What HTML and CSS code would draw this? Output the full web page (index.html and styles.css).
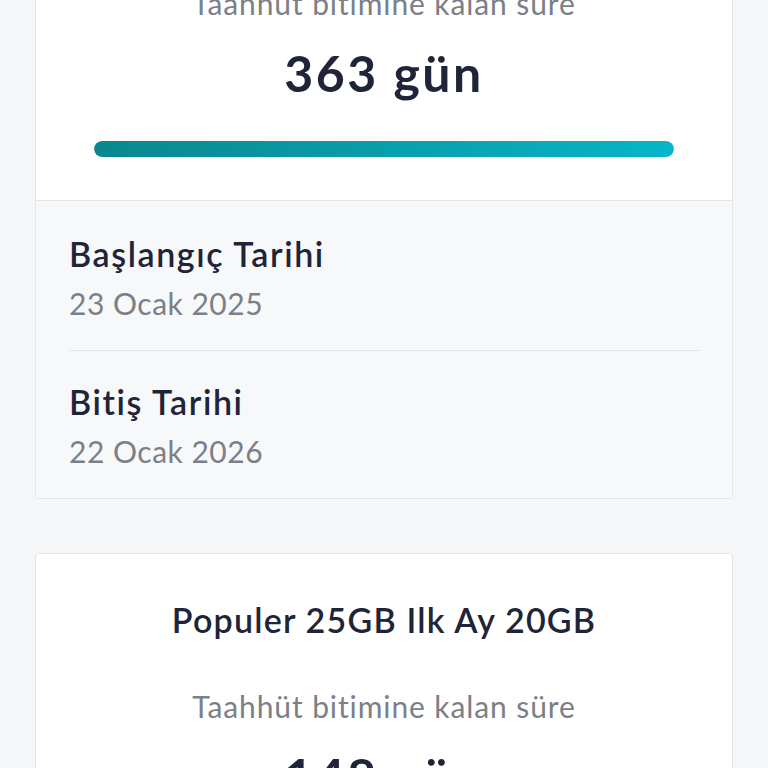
FILE: index.html
```html
<!DOCTYPE html>
<html lang="tr">
<head>
<meta charset="UTF-8"/>
<meta name="viewport" content="width=device-width, initial-scale=1.0"/>
<title>Taahhütlerim</title>
<link rel="stylesheet" href="styles.css">
</head>
<body>

<div class="commitment-list">

  <!-- Commitment card (scrolled, title above viewport) -->
  <div class="commitment-card">
    <div class="commitment-summary">
      <div class="commitment-label">Taahhüt bitimine kalan süre</div>
      <div class="commitment-days">363 gün</div>
      <div class="commitment-bar"><div class="commitment-bar-fill" style="width:100%"></div></div>
    </div>
    <div class="commitment-dates">
      <div class="date-row">
        <div class="date-title">Başlangıç Tarihi</div>
        <div class="date-value">23 Ocak 2025</div>
      </div>
      <div class="date-row">
        <div class="date-title">Bitiş Tarihi</div>
        <div class="date-value">22 Ocak 2026</div>
      </div>
    </div>
  </div>

  <div class="commitment-card">
    <div class="commitment-summary">
      <div class="commitment-name">Populer 25GB Ilk Ay 20GB</div>
      <div class="commitment-label">Taahhüt bitimine kalan süre</div>
      <div class="commitment-days">148 gün</div>
      <div class="commitment-bar"><div class="commitment-bar-fill" style="width:40%"></div></div>
    </div>
  </div>

</div>

</body>
</html>
```

FILE: styles.css
```css
/* GLOBAL */
html,body {
  margin:0; padding:0; background:#f5f6f8; overflow:hidden;
  font-family:"Lato","Noto Sans",sans-serif;
}
:root {
  --text-dark:#1f2438;
  --text-muted:#7b8088;
  --border:#e3e5e9;
  --soft-bg:#f7f8fa;
}

/* LIST (page is scrolled down a bit) */
.commitment-list {
  display:flex; flex-direction:column; gap:54px;
  padding:0 35px; margin-top:-16px;
}

/* CARD */
.commitment-card {
  background:#fff; border:1px solid var(--border); border-radius:4px; overflow:hidden;
}
.commitment-summary {
  display:flex; flex-direction:column; align-items:center; text-align:center;
  padding:46px 0 43px;
}
.commitment-card:first-child .commitment-summary {padding-top:0;}
.commitment-name {
  font-size:34px; line-height:40px; font-weight:600; color:var(--text-dark);
  letter-spacing:1.2px; margin-bottom:48px;
}
.commitment-label {
  font-size:30px; line-height:36px; color:var(--text-muted); letter-spacing:0.9px;
}
.commitment-days {
  font-size:50px; line-height:60px; font-weight:700; color:var(--text-dark);
  letter-spacing:2.5px; margin-top:22px;
}
.commitment-bar {
  align-self:stretch; margin:38px 58px 0; height:16px; border-radius:8px; background:#e8ebee; overflow:hidden;
}
.commitment-bar-fill {
  height:100%; border-radius:8px; background:linear-gradient(90deg,#0b878d,#07b5c9);
}

/* DATES */
.commitment-dates {
  background:var(--soft-bg); border-top:1px solid var(--border); padding:0 32px 0 33px;
}
.date-row {padding:31px 0 29px;}
.date-row:first-child {padding-top:33px;}
.date-row + .date-row {border-top:1px solid #e2e4e7;}
.date-title {
  font-size:34px; line-height:40px; font-weight:600; color:var(--text-dark); letter-spacing:1.6px;
}
.date-value {
  font-size:30px; line-height:36px; color:var(--text-muted); letter-spacing:0.5px; margin-top:11px;
}
```
